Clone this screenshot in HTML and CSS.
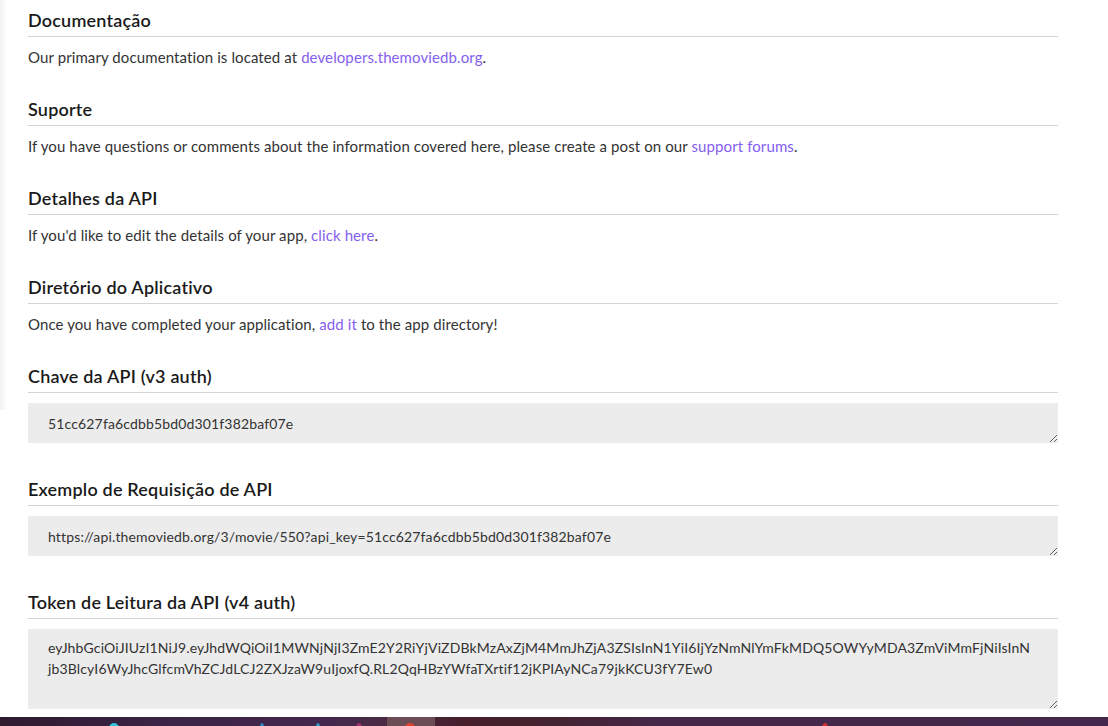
FILE: index.html
```html
<!DOCTYPE html>
<html lang="pt">
<head>
<meta charset="utf-8">
<title>API</title>
<link rel="stylesheet" href="styles.css">
</head>
<body>
<div class="edge"></div>
<main class="content">
  <section class="block">
    <h3 class="title">Documentação</h3>
    <p class="text">Our primary documentation is located at <a href="#">developers.themoviedb.org</a>.</p>
  </section>
  <section class="block">
    <h3 class="title">Suporte</h3>
    <p class="text">If you have questions or comments about the information covered here, please create a post on our <a href="#">support forums</a>.</p>
  </section>
  <section class="block">
    <h3 class="title">Detalhes da API</h3>
    <p class="text">If you'd like to edit the details of your app, <a href="#">click here</a>.</p>
  </section>
  <section class="block">
    <h3 class="title">Diretório do Aplicativo</h3>
    <p class="text">Once you have completed your application, <a href="#">add it</a> to the app directory!</p>
  </section>
  <section class="block">
    <h3 class="title">Chave da API (v3 auth)</h3>
    <textarea class="field" readonly>51cc627fa6cdbb5bd0d301f382baf07e</textarea>
  </section>
  <section class="block">
    <h3 class="title">Exemplo de Requisição de API</h3>
    <textarea class="field" readonly>https://api.themoviedb.org/3/movie/550?api_key=51cc627fa6cdbb5bd0d301f382baf07e</textarea>
  </section>
  <section class="block">
    <h3 class="title">Token de Leitura da API (v4 auth)</h3>
    <textarea class="field tall" readonly>eyJhbGciOiJIUzI1NiJ9.eyJhdWQiOiI1MWNjNjI3ZmE2Y2RiYjViZDBkMzAxZjM4MmJhZjA3ZSIsInN1YiI6IjYzNmNlYmFkMDQ5OWYyMDA3ZmViMmFjNiIsInN
jb3BlcyI6WyJhcGlfcmVhZCJdLCJ2ZXJzaW9uIjoxfQ.RL2QqHBzYWfaTXrtif12jKPIAyNCa79jkKCU3fY7Ew0</textarea>
  </section>
</main>
<div class="taskbar">
  <span class="tb-hl"></span>
  <span class="tb-ico c1"></span>
  <span class="tb-ico c2"></span>
  <span class="tb-ico c3"></span>
  <span class="tb-ico c4"></span>
  <span class="tb-ico c5"></span>
  <span class="tb-ico c6"></span>
</div>
</body>
</html>
```
FILE: styles.css
```css
html, body {
  margin: 0;
  padding: 0;
  background: #fff;
  overflow: hidden;
}
body {
  font-family: "Lato", "Liberation Sans", sans-serif;
  color: #333;
  height: 726px;
}
.edge {
  position: absolute;
  left: 0;
  top: 0;
  width: 7px;
  height: 410px;
  background: linear-gradient(to right, #f2f2f2, #fbfbfb 70%, #fff);
}
.content {
  width: 1030px;
  padding: 8px 0 0 28px;
}
.block {
  margin-bottom: 28px;
}
.title {
  margin: 0;
  font-size: 18px;
  font-weight: 600;
  line-height: 24px;
  letter-spacing: 0.2px;
  color: #1a1a1a;
  padding-bottom: 4px;
  border-bottom: 1px solid #d4d4d4;
}
.text {
  margin: 8px 0 0;
  font-size: 15px;
  line-height: 24px;
  letter-spacing: 0.1px;
  color: #333;
}
.text a {
  color: #8560f0;
  text-decoration: none;
}
.field {
  display: block;
  box-sizing: border-box;
  width: 100%;
  height: 40px;
  margin: 10px 0 34px;
  padding: 10px 20px;
  border: none;
  outline: none;
  background: #ececec;
  font-family: "Lato", "Liberation Sans", sans-serif;
  font-size: 14px;
  line-height: 21px;
  letter-spacing: 0.15px;
  color: #333;
  overflow: hidden;
}
.field.tall {
  height: 80px;
  padding-top: 8px;
  margin-bottom: 0;
}
.taskbar {
  position: fixed;
  left: 0;
  right: 0;
  bottom: 0;
  height: 9px;
  background: linear-gradient(to right, #2f1a2e 0%, #3b2346 15%, #43294d 30%, #4a2a44 34%, #461f2b 42%, #43222f 50%, #45284a 60%, #44294c 100%);
  overflow: hidden;
}
.tb-hl {
  position: absolute;
  left: 387px;
  top: 0;
  width: 48px;
  height: 9px;
  background: #6b4d56;
}
.tb-ico {
  position: absolute;
  top: 6px;
  width: 10px;
  height: 10px;
  border-radius: 50%;
}
.c1 { left: 109px; background: #31c4d8; }
.c2 { left: 260px; background: #2f87d0; width: 4px; }
.c3 { left: 316px; background: #2f9ed0; width: 4px; }
.c4 { left: 356px; background: #a0306f; width: 6px; }
.c5 { left: 405px; background: #e04030; }
.c6 { left: 822px; background: #d03030; width: 6px; }
```
